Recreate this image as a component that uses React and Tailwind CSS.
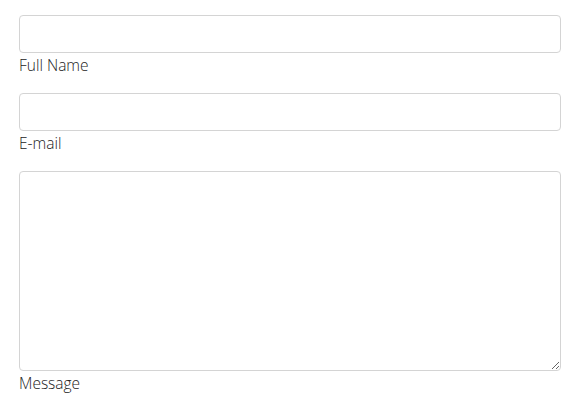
export default function App() {
  return (
    <div className="min-h-screen bg-white pt-[15px] pl-[19px] font-['Open_Sans',sans-serif] text-[#222]">
      <form className="w-[542px] flex flex-col">
        <div className="flex flex-col mb-[16px]">
          <input type="text" className="h-[38px] w-full border border-[#d4d4d4] rounded-[4px] px-3 outline-none" />
          <label className="text-[15.5px] font-light leading-[23px] pt-[1px]">Full Name</label>
        </div>
        <div className="flex flex-col mb-[16px]">
          <input type="email" className="h-[38px] w-full border border-[#d4d4d4] rounded-[4px] px-3 outline-none" />
          <label className="text-[15.5px] font-light leading-[23px] pt-[1px]">E-mail</label>
        </div>
        <div className="flex flex-col">
          <textarea className="h-[200px] w-full border border-[#d4d4d4] rounded-[4px] px-3 py-2 outline-none block" />
          <label className="text-[15.5px] font-light leading-[23px] pt-[1px]">Message</label>
        </div>
      </form>
    </div>
  );
}
